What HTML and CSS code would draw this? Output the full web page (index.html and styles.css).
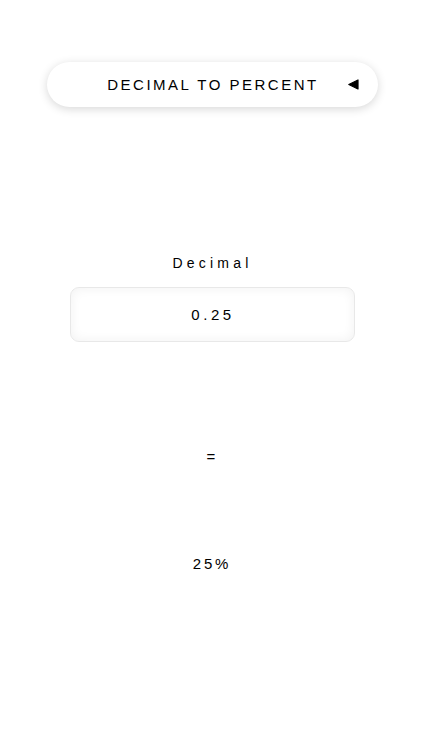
FILE: index.html
```html
<!DOCTYPE html>
<html>
<head>
<meta charset="utf-8">
<link rel="stylesheet" href="styles.css">
</head>
<body>
<div class="page">
  <div class="selector">
    <span class="selector-text">DECIMAL TO PERCENT</span>
    <svg class="arrow" width="11" height="11" viewBox="0 0 11 11"><path d="M0.8 5.5 L10 1 L10 10 Z" fill="#000" stroke="#000" stroke-linejoin="round" stroke-width="1.2"/></svg>
  </div>
  <div class="label">Decimal</div>
  <div class="input">0.25</div>
  <div class="equals">=</div>
  <div class="result">25%</div>
</div>
</body>
</html>
```
FILE: styles.css
```css
html, body {
  margin: 0;
  padding: 0;
  background: #fff;
}
.page {
  width: 422px;
  height: 750px;
  display: flex;
  flex-direction: column;
  align-items: center;
  font-family: "Liberation Sans", Arial, sans-serif;
  color: #000;
}
.selector {
  margin-top: 62px;
  margin-left: 3px;
  width: 331px;
  height: 45px;
  box-sizing: border-box;
  border-radius: 23px;
  background: #fff;
  box-shadow: 0 2px 10px rgba(0,0,0,0.16);
  position: relative;
  display: flex;
  align-items: center;
  justify-content: center;
}
.selector-text {
  font-size: 15px;
  letter-spacing: 2.5px;
  margin-left: 1px;
  line-height: 20px;
}
.arrow {
  position: absolute;
  right: 19px;
  top: 17px;
}
.label {
  margin-top: 146px;
  font-size: 14px;
  letter-spacing: 4.2px;
  line-height: 20px;
  margin-left: 3px;
}
.input {
  margin-top: 14px;
  margin-left: 2px;
  width: 285px;
  height: 55px;
  box-sizing: border-box;
  border-radius: 9px;
  border: 1px solid #e8e8e8;
  box-shadow: inset 0 0 12px rgba(0,0,0,0.06);
  display: flex;
  align-items: center;
  justify-content: center;
  font-size: 15px;
  letter-spacing: 3.6px;
  padding-left: 2px;
  padding-bottom: 1px;
}
.equals {
  margin-top: 105px;
  font-size: 15px;
  line-height: 20px;
}
.result {
  margin-top: 87px;
  font-size: 15px;
  letter-spacing: 2.8px;
  line-height: 20px;
  margin-left: 2px;
}
```
